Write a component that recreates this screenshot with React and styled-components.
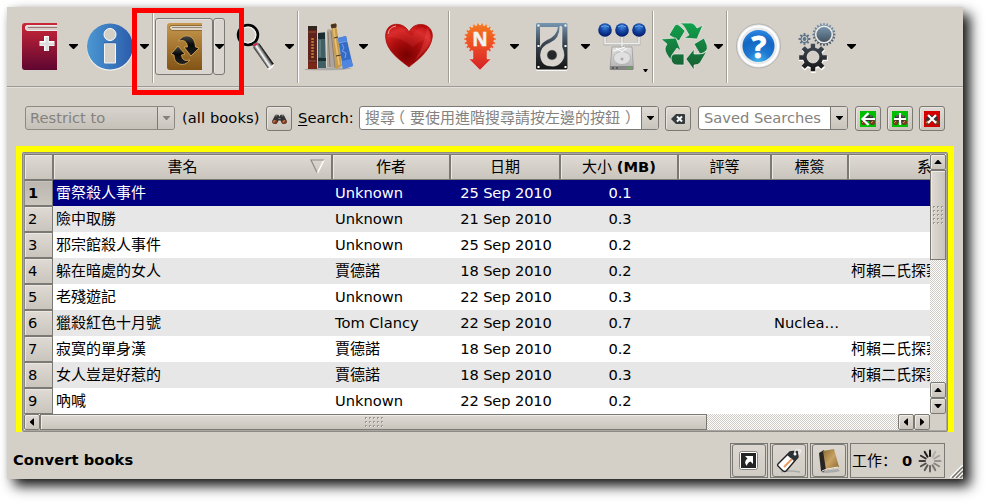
import React from "react";
import styled, { createGlobalStyle, css } from "styled-components";

const Global = createGlobalStyle`
  * { box-sizing: border-box; }
  body {
    margin: 0;
    padding: 7px 0 0 7px;
    min-height: 100vh;
    background: #fff;
    overflow: hidden;
    color: #000;
    font: 14.667px/18px "DejaVu Sans", "Noto Sans CJK TC", sans-serif;
  }
  svg { display: block; flex: none; overflow: visible; }
`;

const edge = "#7b7973";
const face = "linear-gradient(#dfdbd4, #c9c4bc)";

const Window = styled.div`
  position: relative;
  display: flex;
  flex-direction: column;
  width: 956px;
  height: 472px;
  background: #d4cfc7;
  box-shadow: 7px 7px 12px rgba(0, 0, 0, 0.92), 0 0 5px rgba(0, 0, 0, 0.08);
`;

const Toolbar = styled.div`
  display: flex;
  align-items: center;
  flex: none;
  height: 80px;
  border-bottom: 1px solid #9d9a94;
  box-shadow: 0 1px #e3e0db;
`;

const Slot = styled.div`
  position: relative;
  flex: none;
  margin-left: ${(p) => p.$gap}px;
`;

const Separator = styled.div`
  flex: none;
  width: 2px;
  height: 72px;
  margin-left: ${(p) => p.$gap}px;
  border-left: 1px solid #a19e98;
  background: #fff;
`;

const ToolButton = styled.div`
  display: flex;
  align-items: center;
  justify-content: center;
  flex: none;
  width: ${(p) => p.$w}px;
  height: 57px;
  margin-left: ${(p) => p.$gap || 0}px;
  border: 1px solid ${edge};
  border-radius: 3px;
  background: #dad5ce;
  box-shadow: inset 1px 1px #e7e3de;
`;

const CornerArrow = styled.div`
  position: absolute;
  right: -2px;
  bottom: -1px;
`;

const Highlight = styled.div`
  position: absolute;
  left: 125px;
  top: 1px;
  width: 112px;
  height: 87px;
  border: 5px solid #f00;
`;

const SearchBar = styled.div`
  display: flex;
  align-items: flex-start;
  flex: none;
  height: 25px;
  margin-top: 19px;
  padding-left: 18px;
`;

const Combo = styled.div`
  display: flex;
  flex: none;
  width: ${(p) => p.$w}px;
  height: 24px;
  margin-left: ${(p) => p.$gap || 0}px;
  border: 1px solid ${edge};
  border-radius: 3px;
  overflow: hidden;
  background: ${(p) => (p.$disabled ? "linear-gradient(#d8d4cd,#c5c0b8)" : "#fff")};
  color: #84827e;
  line-height: 22px;
  white-space: nowrap;
  ${(p) => p.$disabled && css`border-color: #8c8983;`}
`;

const ComboText = styled.div`
  flex: 1;
  padding-left: ${(p) => p.$pad || 4}px;
  font-size: ${(p) => p.$size || 14.667}px;
`;

const Paren = styled.span`
  display: inline-block;
  transform: translateX(${(p) => p.$shift}px);
`;

const ComboArrow = styled.div`
  display: flex;
  align-items: center;
  justify-content: center;
  width: 17px;
  border-left: 1px solid ${edge};
  background: ${face};
`;

const SmallButton = styled.div`
  display: flex;
  align-items: center;
  justify-content: center;
  flex: none;
  width: 26px;
  height: 25px;
  margin-left: ${(p) => p.$gap}px;
  border: 1px solid ${edge};
  border-radius: 3px;
  background: ${face};
  box-shadow: inset 1px 1px #e8e5e0;
`;

const Label = styled.span`
  flex: none;
  width: ${(p) => p.$w}px;
  margin-left: ${(p) => p.$gap}px;
  line-height: 24px;
  letter-spacing: 0.08px;
  white-space: nowrap;
`;

const Mnemonic = styled.u`
  text-underline-offset: 2px;
`;

const Library = styled.div`
  flex: none;
  width: 938px;
  height: 286px;
  margin: 15px 0 0 9px;
  border: 6px solid #ff0;
  border-bottom: 0;
`;

const TableFrame = styled.div`
  display: grid;
  grid-template-columns: 906px 16px;
  grid-template-rows: 260px 16px;
  width: 926px;
  height: 280px;
  padding: 1px;
  border: 1px solid #8d8a86;
  border-radius: 2px;
  background: #d4cfc7;
  box-shadow: inset 0 0 0 1px #aaa6a0;
`;

const Viewport = styled.div`
  overflow: hidden;
  background: #fff;
`;

const columns = "29px 279px 118px 110px 118px 93px 77px 168px";

const HeaderRow = styled.div`
  display: grid;
  grid-template-columns: ${columns};
  width: 992px;
  height: 26px;
`;

const HeaderCell = styled.div`
  position: relative;
  display: flex;
  align-items: center;
  justify-content: center;
  padding-right: ${(p) => (p.$sorted ? 20 : 0)}px;
  border: 1px solid ${edge};
  border-left-color: ${(p) => (p.$first ? "#8d8a86" : edge)};
  background: ${face};
  box-shadow: inset 1px 1px #ebe8e4;
  font-size: 15px;
  font-weight: 400;
  white-space: pre;
  svg { position: absolute; right: 6px; top: 4px; }
  b { font-size: 14.667px; }
`;

const Row = styled.div`
  display: grid;
  grid-template-columns: ${columns};
  width: 992px;
  height: 26px;
  background: ${(p) => (p.$selected ? "#000080" : p.$odd ? "#e7e7e7" : "#fff")};
  color: ${(p) => (p.$selected ? "#fff" : "#000")};
`;

const RowHeader = styled.div`
  padding-left: 3px;
  border: 1px solid ${edge};
  border-left-color: #8d8a86;
  background: ${(p) => (p.$selected ? "linear-gradient(#bab6af,#cbc7bf)" : face)};
  box-shadow: inset 1px 1px ${(p) => (p.$selected ? "#c8c4bd" : "#ebe8e4")};
  color: #000;
  font-weight: ${(p) => (p.$selected ? 700 : 400)};
  line-height: 24px;
`;

const Cell = styled.div`
  padding: 0 3px;
  overflow: hidden;
  white-space: nowrap;
  line-height: 26px;
  font-size: ${(p) => (p.$cjk ? 15 : 14.667)}px;
  ${(p) => p.$center && css`
    padding: 0 2px 0 4px;
    text-align: center;
    letter-spacing: -0.12px;
  `}
`;

const ScrollBar = styled.div`
  display: flex;
  flex-direction: ${(p) => (p.$vertical ? "column" : "row")};
  background: repeating-conic-gradient(#fff 0 25%, #d0ccc5 0 50%) 0 0 / 2px 2px;
`;

const ScrollButton = styled.div`
  display: flex;
  align-items: center;
  justify-content: center;
  flex: none;
  width: 16px;
  height: 16px;
  border: 1px solid ${edge};
  border-radius: 2px;
  background: ${face};
  box-shadow: inset 1px 1px #efece8;
`;

const Thumb = styled(ScrollButton)`
  width: ${(p) => p.$w}px;
  height: ${(p) => p.$h}px;
  border-radius: 0;
  background: linear-gradient(${(p) => (p.$h > p.$w ? "90deg" : "180deg")}, #dfdbd4, #c9c4bc);
`;

const Spacer = styled.div`
  flex: 1;
`;

const StatusBar = styled.div`
  position: relative;
  display: flex;
  align-items: center;
  flex: none;
  gap: 2px;
  height: 35px;
  margin-top: 11px;
  padding: 0 18px 0 6px;
`;

const StatusText = styled.b`
  flex: 1;
  margin-top: -1px;
  letter-spacing: 0.08px;
`;

const StatusFrame = styled.div`
  display: flex;
  align-items: center;
  flex: none;
  width: ${(p) => p.$w}px;
  height: 35px;
  padding: ${(p) => p.$pad};
  border: 1px solid ${edge};
  font-family: "DejaVu Sans", "Noto Sans CJK SC", sans-serif;
  font-size: 15px;
  white-space: pre;
  b { margin: 0 6px 0 5px; font-size: 14.667px; }
`;

const StatusButton = styled.div`
  display: flex;
  align-items: center;
  justify-content: center;
  width: 34px;
  height: 33px;
  border: 1px solid ${edge};
  border-radius: 3px;
  background: linear-gradient(#dcd8d1, #d0cbc3);
`;

const Grip = styled.div`
  position: absolute;
  right: 0;
  bottom: 0;
  overflow: hidden;
`;

/* Arrows */
const DownArrow = ({ color = "#000" }) => (
  <svg width="9" height="5" viewBox="0 0 9 5"><path d="M0 0H9V1L5 5H4L0 1Z" fill={color} /></svg>
);
const ComboMark = ({ color = "#000" }) => (
  <svg width="7" height="4" viewBox="0 0 7 4"><path d="M0 0H7V.6L4 4H3L0 .6Z" fill={color} /></svg>
);
const turns = { down: 0, left: 90, up: 180, right: 270 };
const ScrollMark = ({ to }) => (
  <svg width="8" height="8" viewBox="0 0 8 8">
    <path d="M.5 2H7.5V2.6L4.5 6H3.5L.5 2.6Z" transform={`rotate(${turns[to]} 4 4)`} />
  </svg>
);
const Dots = ({ cols, rows }) => (
  <svg width={cols * 4} height={rows * 4}>
    {Array.from({ length: cols * rows }, (_, i) => (
      <g key={i} transform={`translate(${(i % cols) * 4 + 1} ${Math.floor(i / cols) * 4 + 1})`}>
        <rect width="2" height="2" fill="#f0eeea" />
        <path d="M0 0H2V1H1V2H0Z" fill="#9c9891" />
      </g>
    ))}
  </svg>
);

/* Toolbar icons */
const AddBook = () => (
  <svg width="35" height="48" viewBox="0 0 35 48">
    <defs><linearGradient id="ab" x2="0" y2="1"><stop stopColor="#cb2737" /><stop offset="1" stopColor="#5e0631" /></linearGradient></defs>
    <path d="M3 0H35V2H6Q3 2 3 4.500T6 8H35V47H3Q0 47 0 44V3Q0 0 3 0Z" fill="url(#ab)" />
    <path d="M35 2.500H6Q3.500 2.500 3.500 4.800T6 7.500H35" fill="#d8cfca" stroke="#eee" />
    <path d="M6 4.500H35" stroke="#9d7775" />
    <path d="M24.500 13V28M17.500 20.500H32.500" stroke="#fff" strokeWidth="5" />
    <path d="M25 14V28M18 21H32" stroke="#ddd" strokeWidth="3" />
  </svg>
);
const Info = () => (
  <svg width="46" height="48" viewBox="0 0 46 48">
    <defs><linearGradient id="inf"><stop stopColor="#4b97d2" /><stop offset="1" stopColor="#2b5cab" /></linearGradient></defs>
    <circle cx="23" cy="24.500" r="23.200" fill="#f4f2ef" />
    <circle cx="23" cy="23.500" r="23" fill="url(#inf)" />
    <circle cx="23" cy="11.500" r="6" fill="#d4cfc7" stroke="#fff" />
    <path d="M17.500 20.500H28.500V40H17.500Z" fill="#d4cfc7" stroke="#f5f5f5" />
    <path d="M17 19.800H29" stroke="#315f96" />
  </svg>
);
const Convert = () => (
  <svg width="35" height="48" viewBox="0 0 35 48">
    <defs>
      <linearGradient id="cb" x2="0" y2="1"><stop stopColor="#c8984c" /><stop offset="1" stopColor="#815416" /></linearGradient>
      <linearGradient id="ca" x2="0" y2="1"><stop stopColor="#494b4a" /><stop offset=".45" stopColor="#090b0a" /><stop offset="1" stopColor="#222" /></linearGradient>
    </defs>
    <path d="M3 0H35V47H3Q0 47 0 44V3Q0 0 3 0Z" fill="url(#cb)" />
    <path d="M35 2.500H5Q2.500 2.500 2.500 4.500T5 7.500H35" fill="#dfd6c9" stroke="#8f6b35" />
    <path d="M5 4.500H35" stroke="#958675" />
    <g fill="url(#ca)" stroke="#e0ad55" strokeWidth=".8">
      <path d="M11.500 18Q16 11.500 22 13Q28 15 28.500 24L32 25L24 33L17 24L20.500 24Q20 18 15.500 17.500Q13.500 17.500 11.500 18Z" />
      <path d="M23 37Q18 43 12.500 41Q7 39 7 32L4 31L11 23L18 31L14.500 32Q15 37 19 37.500Z" />
    </g>
  </svg>
);
const Magnifier = () => (
  <svg width="37" height="48" viewBox="0 0 37 48">
    <defs><linearGradient id="mg" gradientUnits="userSpaceOnUse" x1="23.500" y1="35.500" x2="29.500" y2="31.500"><stop stopColor="#222" /><stop offset=".2" stopColor="#777" /><stop offset=".45" stopColor="#fff" /><stop offset=".75" stopColor="#888" /><stop offset="1" stopColor="#111" /></linearGradient></defs>
    <circle cx="11" cy="12" r="9.800" fill="none" stroke="#050505" strokeWidth="2.800" />
    <circle cx="11" cy="12" r="7.800" fill="none" stroke="#eee" strokeWidth="1.300" />
    <path d="M16 21L20 19L22 21L17 25Z" fill="#777" />
    <path d="M16 23L20 20.500" stroke="#d4204b" strokeWidth="1.500" />
    <path d="M16.500 24.500L22 20.500L36.500 41L31 45Z" fill="url(#mg)" />
    <path d="M16.500 24.500L31 45" stroke="#444" strokeWidth=".8" />
    <path d="M22 20.500L36.500 41" stroke="#222" strokeWidth=".9" />
    <path d="M31 46L37 41L36 44L32 47Z" fill="#fff" />
  </svg>
);
const Bookshelf = () => (
  <svg width="48" height="48" viewBox="0 0 48 48">
    <path d="M0 46Q24 43 47 45Q43 48 0 47Z" fill="#999" opacity=".7" />
    <path d="M3 4L12 4L12 45L3 46Z" fill="#5e241b" /><path d="M3 3H12V7H3Z" fill="#35251f" /><path d="M3 40H12V46H3Z" fill="#792718" />
    <path d="M3.500 9H11M3.500 38H11" stroke="#955236" />
    <path d="M7.500 15V36" stroke="#b8752f" strokeWidth="2.500" strokeDasharray="2 1" />
    <path d="M13 10L20 9.500L21 45L13 45Z" fill="#3f5f64" /><path d="M13 10L20 9.500V16H13ZM13 35H21V38H13Z" fill="#192d31" /><path d="M15 17V34" stroke="#7b9190" />
    <path d="M22 7Q25 5 29 8L33 44H22Z" fill="#afa497" /><path d="M26 8L30 45M23 9L25 44" stroke="#786e62" strokeWidth=".7" />
    <path d="M26 1L31 0L37 43L31 46Z" fill="#c79b4c" /><path d="M28.500 5L34 42" stroke="#e6c277" strokeWidth="1.600" /><path d="M26 2L31 1V4L27 5ZM29 15L33 14M31 33L36 32" stroke="#49341f" fill="#49341f" />
    <path d="M33 15L41 13L48 43L38 46Z" fill="#346bc6" /><path d="M33 15L41 13L42 17L34 20ZM37 38L46 36L48 43L38 46Z" fill="#4f86e2" /><path d="M37 21L39 25L37 28L41 30L40 35M34 20L42 18" stroke="#8ab4e8" fill="none" strokeWidth=".8" />
  </svg>
);
const Heart = () => (
  <svg width="48" height="48" viewBox="0 0 48 48">
    <defs><radialGradient id="ht" cx=".45" cy=".72" r=".75"><stop stopColor="#780000" /><stop offset=".45" stopColor="#a90c0c" /><stop offset=".8" stopColor="#d52323" /><stop offset="1" stopColor="#b90b0b" /></radialGradient></defs>
    <path d="M24 44C18 39 1 29 .6 14C.3 5 6 1 12 1.300C18 1.500 22 5 24 9C27 3 32 1 37 1.500C44 2 48 8 47.300 14C46 28 30 39 24 44Z" fill="url(#ht)" stroke="#a00909" strokeWidth=".7" />
    <path d="M3 14Q2 5 10 3Q17 3 22 10L27 13Q30 7 38 4Q45 7 45 14Q35 17 28 24Q16 14 3 14Z" fill="#ff6666" opacity=".15" />
    <path d="M42 4Q47 9 45 18Q42 27 30 37Q40 22 42 4Z" fill="#ef5858" opacity=".3" />
    <path d="M3 11Q4 4 11 3" fill="none" stroke="#f0a0a0" />
  </svg>
);
const gearPath = (cx, cy, outer, inner, teeth, phase = 0) => {
  const pts = [];
  for (let i = 0; i < teeth; i++)
    [[-0.3, inner], [-0.2, outer], [0.2, outer], [0.3, inner]].forEach(([d, r]) => {
      const a = ((i + d + phase) / teeth) * Math.PI * 2;
      pts.push(`${(cx + Math.cos(a) * r).toFixed(2)} ${(cy + Math.sin(a) * r).toFixed(2)}`);
    });
  return `M${pts.join("L")}Z`;
};
const NewsText = styled.text`
  font: bold 19px "Open Sans", sans-serif;
`;
const News = () => (
  <svg width="32" height="48" viewBox="0 0 32 48">
    <defs><linearGradient id="nw" gradientUnits="userSpaceOnUse" x1="0" y1="0" x2="0" y2="47"><stop stopColor="#f47b20" /><stop offset=".5" stopColor="#ec4b24" /><stop offset="1" stopColor="#d42127" /></linearGradient></defs>
    <g fill="url(#nw)" stroke="#eee" strokeWidth=".4">
      <path d={gearPath(16, 16, 16, 14, 22)} />
      <path d="M9 28H23V36H27L16 47L5 36H9Z" />
    </g>
    <path d="M9.500 27H22.500V30H9.500Z" fill="#e5402a" />
    <NewsText x="16" y="23" textAnchor="middle" fill="#f2f2f2" stroke="#f2f2f2" strokeWidth=".5">N</NewsText>
  </svg>
);
const Disk = () => (
  <svg width="32" height="48" viewBox="0 0 32 48">
    <defs><linearGradient id="dk" x2="0" y2="1"><stop stopColor="#7596b1" /><stop offset=".45" stopColor="#39434e" /><stop offset="1" stopColor="#171515" /></linearGradient></defs>
    <rect y="1" width="31.500" height="47" rx="1.500" fill="#f8f8f8" />
    <rect width="31.500" height="46.500" rx="1.500" fill="url(#dk)" />
    <path d="M4 4H22Q21 13 11 17Q5 20 4 25Z" fill="#d7d3cc" />
    <path d="M26 4V24Q30 33 26 38Q22 44 15 43Q5 43 4.500 32Q5 23 14 20Q24 16 24 3Z" fill="#d8d4cd" stroke="#f1f1f1" strokeWidth=".5" />
    <circle cx="16" cy="32" r="5" fill="#252729" stroke="#aaa" strokeWidth=".5" />
    {[2.5, 23, 44].map((y) => <path key={y} d={`M1.500 ${y}H3.500M28.500 ${y}H30.500`} stroke="#fff" strokeWidth="2" />)}
  </svg>
);
const Server = () => (
  <svg width="48" height="48" viewBox="0 0 48 48">
    <defs>
      <radialGradient id="sv" cx=".5" cy=".3" r=".7"><stop stopColor="#3e87dc" /><stop offset=".45" stopColor="#1649a5" /><stop offset="1" stopColor="#001666" /></radialGradient>
      <linearGradient id="sd" x2="0" y2="1"><stop stopColor="#e2e2e2" /><stop offset="1" stopColor="#b0b0b0" /></linearGradient>
    </defs>
    <path d="M7 14V21H41V14M24 14V28" fill="none" stroke="#b8b8b6" strokeWidth="3" /><path d="M7 14V20.500H41V14M24 14V28" fill="none" stroke="#eee" strokeWidth="1.500" />
    {[7, 24, 41].map((x) => <g key={x}><circle cx={x} cy="7" r="6.800" fill="url(#sv)" /><path d={`M${x - 4} 4Q${x} 1 ${x + 4} 4`} stroke="#69a8e8" fill="none" /></g>)}
    <path d="M14 24H34L35.500 46H12Z" fill="url(#sd)" stroke="#999" strokeWidth=".8" />
    <path d="M12 43H35V47H12Z" fill="#858585" /><path d="M14 45H22" stroke="#333" strokeDasharray="2 2" /><path d="M29 45H34" stroke="#4ac735" />
    <ellipse cx="24" cy="35" rx="8.500" ry="6.500" fill="#e0e0e0" stroke="#aaa" strokeWidth=".7" /><circle cx="24" cy="36" r="1.500" fill="#aaa" /><path d="M15 28L27 24M18 25L24 29L29 25" stroke="#fff" fill="none" />
  </svg>
);
const Recycle = () => (
  <svg width="47" height="48" viewBox="0 0 47 48">
    <defs><linearGradient id="rc" gradientUnits="userSpaceOnUse" x1="0" y1="0" x2="0" y2="47"><stop stopColor="#11a14c" /><stop offset="1" stopColor="#185c30" /></linearGradient></defs>
    <g fill="url(#rc)" stroke="#eceae6" strokeWidth=".7">
      <path d="M8 12L14 2Q16 0 19 3L24 8L18 18Z" />
      <path d="M18 0H31Q34 1 36 5L42 2L36 16L23 15L28 12L24 5Q22 1 18 0Z" />
      <path d="M0 16L15 15L20 28L16 25L11 32L10 37Q4 30 4 26Q4 24 6 21Z" />
      <path d="M10 36Q10 31 14 31H23V42H16Q11 42 10 36Z" />
      <path d="M33 21L43 15L46 22Q47 26 45 28Q43 30 39 31Z" />
      <path d="M46 28L39 40Q37 42 33 42V47L25 36L33 26V31H38Q43 31 46 28Z" />
    </g>
  </svg>
);
const HelpText = styled.text`
  font: bold 31px "Open Sans", sans-serif;
`;
const Help = () => (
  <svg width="45" height="48" viewBox="0 0 45 48">
    <defs><radialGradient id="hp" cx=".5" cy="1" r="1"><stop stopColor="#48b5ef" /><stop offset=".38" stopColor="#1d78d0" /><stop offset=".7" stopColor="#1366c1" /><stop offset="1" stopColor="#2e88e4" /></radialGradient></defs>
    <circle cx="22.500" cy="23" r="22" fill="#e7e7e7" stroke="#aaa" strokeWidth=".8" />
    <circle cx="22.500" cy="23" r="19.500" fill="#e8e9ea" stroke="#fff" strokeWidth="2" />
    <circle cx="22.500" cy="23" r="16" fill="url(#hp)" />
    <HelpText x="22.800" y="34.500" textAnchor="middle" fill="#fff" stroke="#fff" strokeWidth=".8">?</HelpText>
  </svg>
);
const Gears = () => (
  <svg width="37" height="48" viewBox="0 0 37 48">
    <defs>
      <linearGradient id="gr" x2="0" y2="1"><stop stopColor="#7897af" /><stop offset="1" stopColor="#41505f" /></linearGradient>
      <linearGradient id="gd" x2="0" y2="1"><stop stopColor="#414b56" /><stop offset="1" stopColor="#161515" /></linearGradient>
    </defs>
    <path d={gearPath(25, 11.5, 11.5, 9.5, 20)} fill="url(#gr)" />
    <circle cx="25" cy="11.500" r="8.300" fill="url(#gr)" stroke="#edeae5" strokeWidth="1.600" />
    <path d={gearPath(5.5, 16, 6, 4, 8)} fill="#5f7489" /><circle cx="5.500" cy="16" r="2.500" fill="#62768a" stroke="#e0ddda" />
    <path d={gearPath(14, 35, 14.5, 10.5, 8)} fill="#fff" transform="translate(.3 .8)" />
    <path d={gearPath(14, 34.5, 14, 10, 8)} fill="url(#gd)" />
    <circle cx="14" cy="34" r="6" fill="#d4cfc7" stroke="#fff" strokeWidth=".6" />
  </svg>
);

/* Search bar icons */
const BinocularShape = () => (
  <>
    <path d="M4 2H7L8 4L9 2H12L15 9Q15 12 12 12Q10 12 9 8H7Q6 12 4 12Q1 12 1 9Z" fill="#333" />
    <path d="M4 3H6M10 3H12M7 6H9" stroke="#888" />
    <circle cx="3.500" cy="9.500" r="2.300" fill="#853d20" /><circle cx="12.500" cy="9.500" r="2.300" fill="#853d20" />
    <path d="M2 10L4 8M11 10L13 8" stroke="#d18b5b" />
  </>
);
const Binoculars = () => (
  <svg width="17" height="12" viewBox="0 0 16 13" preserveAspectRatio="none"><BinocularShape /></svg>
);
const SavedIcon = ({ color, mark }) => (
  <svg width="16" height="16" viewBox="0 0 16 16">
    <rect width="16" height="16" fill={color} />
    <g transform="translate(0 2)"><BinocularShape /></g>
    <path d={mark} fill="none" stroke="#fff" strokeWidth="2.200" />
  </svg>
);
const Clear = () => (
  <svg width="14" height="10" viewBox="0 0 14 10">
    <path d="M0 5L5 0H13Q14 0 14 1V9Q14 10 13 10H5Z" fill="#333b3d" />
    <path d="M6 2.500L11 7.500M11 2.500L6 7.500" stroke="#fff" strokeWidth="2" />
  </svg>
);
const SortMark = () => (
  <svg width="15" height="15" viewBox="0 0 15 15">
    <path d="M14 1L7.500 14" stroke="#fff" strokeWidth="1.500" /><path d="M14 1H1L7 13.500" fill="none" stroke="#8e8b85" strokeWidth="1.200" />
  </svg>
);

/* Status bar icons */
const CoverIcon = () => (
  <svg width="20" height="20" viewBox="0 0 20 20">
    <rect x=".5" y=".5" width="18" height="18" rx="2" fill="#fff" stroke="#87857f" />
    <rect x="2" y="2" width="15" height="15" fill="#242424" />
    <path d="M6 5H14V13L11.500 10.500Q8 12 8 15Q4 11 8.500 7.500Z" fill="#fff" />
  </svg>
);
const TagIcon = () => (
  <svg width="24" height="24" viewBox="0 0 24 24">
    <path d="M4 23Q12 21 23 23" fill="none" stroke="#aaa" strokeWidth="1.500" />
    <path d="M1 15L13 3L20 2L21 8L10 21Q8 24 5 21L1 17Q0 16 1 15Z" fill="#fff" stroke="#222" strokeWidth="1.400" />
    <path d="M13 3L20 2L21 8L17 12L10 6Z" fill="#2c3235" /><path d="M7 18L15 10" stroke="#ed9a61" strokeWidth="2" />
    <circle cx="18" cy="5" r="1.500" fill="#fff" /><path d="M18 5Q17 0 21 1Q26 0 22 5" fill="none" stroke="#eee" strokeWidth="1.300" />
  </svg>
);
const BookIcon = () => (
  <svg width="22" height="24" viewBox="0 0 22 24">
    <defs><linearGradient id="bk" x2="1" y2="1"><stop stopColor="#8b672c" /><stop offset=".5" stopColor="#c8a264" /><stop offset="1" stopColor="#8d642b" /></linearGradient></defs>
    <path d="M4 22L20 20L22 22Q15 24 4 24Z" fill="#aaa" />
    <path d="M1 4L6 1L10 19L5 23L3 22Z" fill="#282522" /><path d="M5 2L16 0L21 18L8 21Z" fill="url(#bk)" /><path d="M4 22L9 20L20 18" fill="none" stroke="#eee" />
  </svg>
);
const Spinner = () => (
  <svg width="24" height="24" viewBox="0 0 24 24">
    {Array.from({ length: 12 }, (_, i) => (
      <path key={i} d="M12 1.500V7" stroke="#111" strokeWidth="2" strokeLinecap="round" opacity={i === 0 ? 1 : 0.08 + i * 0.076} transform={`rotate(${i * 30} 12 12)`} />
    ))}
  </svg>
);

const books = [
  ["雷祭殺人事件", "Unknown", "25 Sep 2010", "0.1", "", ""],
  ["險中取勝", "Unknown", "21 Sep 2010", "0.3", "", ""],
  ["邪宗館殺人事件", "Unknown", "25 Sep 2010", "0.2", "", ""],
  ["躲在暗處的女人", "賈德諾", "18 Sep 2010", "0.2", "", "柯賴二氏探案"],
  ["老殘遊記", "Unknown", "22 Sep 2010", "0.3", "", ""],
  ["獵殺紅色十月號", "Tom Clancy", "22 Sep 2010", "0.7", "Nuclea…", ""],
  ["寂寞的單身漢", "賈德諾", "18 Sep 2010", "0.2", "", "柯賴二氏探案"],
  ["女人豈是好惹的", "賈德諾", "18 Sep 2010", "0.3", "", "柯賴二氏探案"],
  ["吶喊", "Unknown", "22 Sep 2010", "0.2", "", ""],
];

const Menu = ({ gap }) => <Slot $gap={gap}><DownArrow /></Slot>;

export default function App() {
  return (
    <>
      <Global />
      <Window>
        <Toolbar>
          <Slot $gap={15}><AddBook /></Slot>
          <Menu gap={12} />
          <Slot $gap={9}><Info /></Slot>
          <Menu gap={7} />
          <Separator $gap={3} />
          <ToolButton $gap={1} $w={58}><Convert /></ToolButton>
          <ToolButton $w={12}><DownArrow /></ToolButton>
          <Slot $gap={12}><Magnifier /></Slot>
          <Menu gap={11} />
          <Separator $gap={3} />
          <Slot $gap={6}><Bookshelf /></Slot>
          <Menu gap={6} />
          <Slot $gap={17}><Heart /></Slot>
          <Separator $gap={15} />
          <Slot $gap={14}><News /></Slot>
          <Menu gap={14} />
          <Slot $gap={17}><Disk /></Slot>
          <Menu gap={13} />
          <Slot $gap={8}>
            <Server />
            <CornerArrow><svg width="5" height="3" viewBox="0 0 5 3"><path d="M0 0H5L3 3H2Z" /></svg></CornerArrow>
          </Slot>
          <Separator $gap={6} />
          <Slot $gap={7}><Recycle /></Slot>
          <Menu gap={6} />
          <Separator $gap={3} />
          <Slot $gap={8}><Help /></Slot>
          <Slot $gap={18}><Gears /></Slot>
          <Menu gap={11} />
        </Toolbar>

        <SearchBar>
          <Combo $w={150} $disabled>
            <ComboText>Restrict to</ComboText>
            <ComboArrow><ComboMark color="#85827d" /></ComboArrow>
          </Combo>
          <Label $w={77} $gap={7}>(all books)</Label>
          <SmallButton $gap={7}><Binoculars /></SmallButton>
          <Label $w={55} $gap={6}><Mnemonic>S</Mnemonic>earch:</Label>
          <Combo $w={300} $gap={6}>
            <ComboText $pad={5} $size={15}>
              搜尋<Paren $shift={-5}>（</Paren>要使用進階搜尋請按左邊的按鈕<Paren $shift={5}>）</Paren>
            </ComboText>
            <ComboArrow><ComboMark /></ComboArrow>
          </Combo>
          <SmallButton $gap={6}><Clear /></SmallButton>
          <Combo $w={150} $gap={7}>
            <ComboText $pad={5}>Saved Searches</ComboText>
            <ComboArrow><ComboMark /></ComboArrow>
          </Combo>
          <SmallButton $gap={7}><SavedIcon color="#00bf00" mark="M8.500 2L2.500 8L8.500 14M3 8H15" /></SmallButton>
          <SmallButton $gap={6}><SavedIcon color="#00bf00" mark="M2 8H14M8 2V14" /></SmallButton>
          <SmallButton $gap={6}><SavedIcon color="#d40000" mark="M4 4L12 12M12 4L4 12" /></SmallButton>
        </SearchBar>

        <Library>
          <TableFrame>
            <Viewport>
              <HeaderRow>
                <HeaderCell $first />
                <HeaderCell $sorted>書名<SortMark /></HeaderCell>
                <HeaderCell>作者</HeaderCell>
                <HeaderCell>日期</HeaderCell>
                <HeaderCell>大小 <b>(MB)</b></HeaderCell>
                <HeaderCell>評等</HeaderCell>
                <HeaderCell>標簽</HeaderCell>
                <HeaderCell>系列</HeaderCell>
              </HeaderRow>
              {books.map(([title, author, date, size, tags, series], i) => (
                <Row key={title} $selected={i === 0} $odd={i % 2 === 1}>
                  <RowHeader $selected={i === 0}>{i + 1}</RowHeader>
                  <Cell $cjk>{title}</Cell>
                  <Cell $cjk={author === "賈德諾"}>{author}</Cell>
                  <Cell $center>{date}</Cell>
                  <Cell $center>{size}</Cell>
                  <Cell />
                  <Cell>{tags}</Cell>
                  <Cell $cjk>{series}</Cell>
                </Row>
              ))}
            </Viewport>
            <ScrollBar $vertical>
              <ScrollButton><ScrollMark to="up" /></ScrollButton>
              <Thumb $w={16} $h={90}><Dots cols={3} rows={5} /></Thumb>
              <Spacer />
              <ScrollButton><ScrollMark to="up" /></ScrollButton>
              <ScrollButton><ScrollMark to="down" /></ScrollButton>
            </ScrollBar>
            <ScrollBar>
              <ScrollButton><ScrollMark to="left" /></ScrollButton>
              <Thumb $w={667} $h={16}><Dots cols={5} rows={3} /></Thumb>
              <Spacer />
              <ScrollButton><ScrollMark to="left" /></ScrollButton>
              <ScrollButton><ScrollMark to="right" /></ScrollButton>
            </ScrollBar>
          </TableFrame>
        </Library>

        <StatusBar>
          <StatusText>Convert books</StatusText>
          <StatusFrame $w={38} $pad="0 1px"><StatusButton><CoverIcon /></StatusButton></StatusFrame>
          <StatusFrame $w={38} $pad="0 1px"><StatusButton><TagIcon /></StatusButton></StatusFrame>
          <StatusFrame $w={38} $pad="0 1px"><StatusButton><BookIcon /></StatusButton></StatusFrame>
          <StatusFrame $w={95} $pad="0 2px 0 1px">
            工作：<b>0</b><Spinner />
          </StatusFrame>
          <Grip>
            <svg width="13" height="13" viewBox="0 0 13 13">
              <path d="M0 13L13 0M4 13L13 4M8 13L13 8" stroke="#fff" strokeWidth="1.500" />
              <path d="M2 13L13 2M6 13L13 6M10 13L13 10" stroke="#77746e" strokeWidth="1.500" />
            </svg>
          </Grip>
        </StatusBar>
        <Highlight />
      </Window>
    </>
  );
}
